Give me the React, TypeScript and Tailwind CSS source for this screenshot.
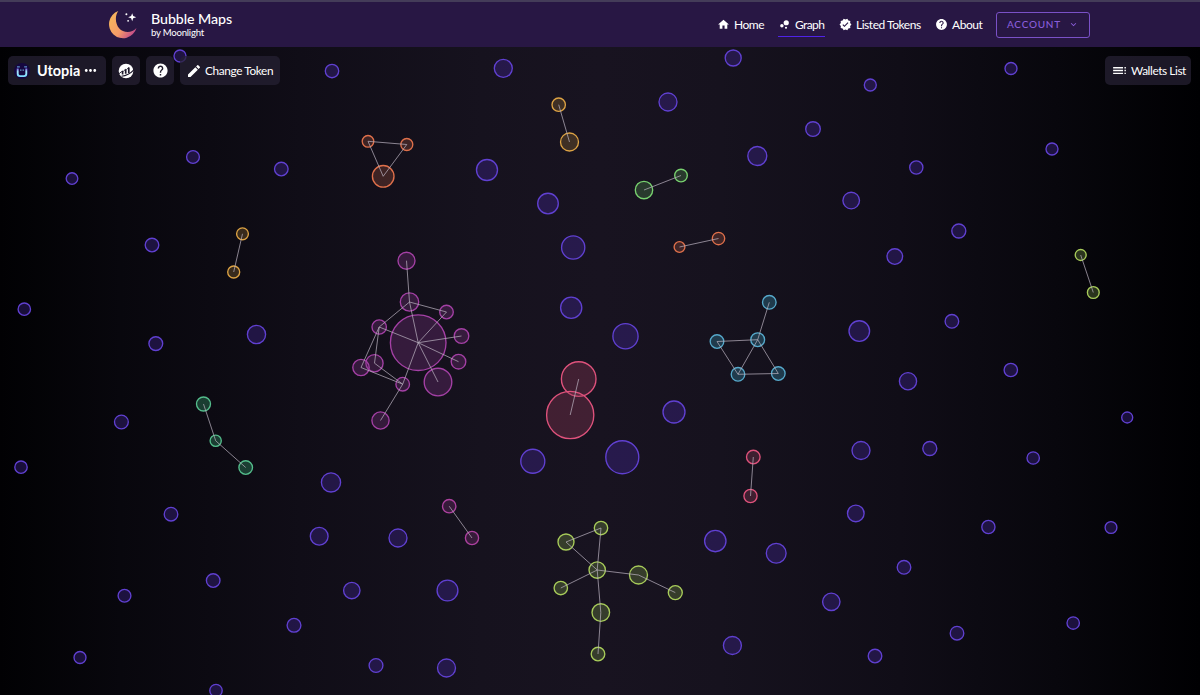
import React from 'react';
import { MdHome, MdBubbleChart, MdVerified, MdHelp, MdToc, MdEdit, MdMoreHoriz, MdExpandMore } from 'react-icons/md';

type Node = [number, number, number];
type Cluster = { stroke: string; fill: string; nodes: Node[]; links: [number, number][] };

const wallets: Node[] = [
  [180, 56, 6], [332, 71, 6.7], [503.3, 68.3, 9], [733.2, 58, 8], [668, 102, 9], [870.3, 85, 6], [1011, 68.5, 6],
  [813, 129, 7.3], [757.3, 156, 9.5], [916.3, 167.5, 6.6], [1052, 149, 6], [193, 157, 6.4], [281.3, 169, 6.8],
  [72, 178.5, 5.8], [487, 170, 10.5], [548, 203.5, 10.3], [851.2, 200.5, 8.3], [152, 245, 6.8], [573.2, 247.5, 11.6],
  [894.8, 256.5, 7.8], [958.8, 231, 7], [24.3, 309.2, 6.2], [571.2, 307.7, 10.6], [256.5, 334.5, 9.1], [155.8, 343.6, 6.9],
  [625.5, 336.2, 12.6], [859.3, 331, 10.3], [951.9, 321.3, 6.8], [908, 381.2, 8.6], [1010.8, 370, 6.7], [1127.2, 417.5, 5.5],
  [121.4, 422, 6.9], [674, 412, 11], [21, 467.2, 6.2], [532.8, 461.2, 12], [622.3, 457.2, 16.5], [861, 450.5, 9],
  [929.8, 448.5, 7], [1033.2, 458, 6.2], [331, 482.4, 9.6], [171, 514.2, 6.8], [319.2, 536.2, 8.9], [398, 538, 9],
  [855.8, 513.4, 8.3], [988.4, 527, 6.6], [1111, 527.5, 5.9], [715.3, 541, 10.7], [776.2, 553.2, 9.9], [904, 567.3, 6.8],
  [213.2, 580.5, 6.8], [124.5, 595.7, 6.4], [351.8, 590.5, 8.2], [447.5, 590.5, 10.4], [831.3, 601.8, 8.7],
  [294, 625.3, 6.9], [1073.2, 623, 6.2], [957, 633.2, 6.8], [732.4, 645.5, 9], [80, 657.5, 6], [376, 665.5, 6.9],
  [446.5, 668, 9], [875, 656, 6.8], [216, 690.5, 6.2],
];

const clusters: Cluster[] = [
  {
    stroke: '#a440a5', fill: '#7f348650',
    nodes: [[418.2, 342.7, 27.8], [406.5, 260.7, 8.5], [409.5, 302, 9.2], [446.5, 312, 6.8], [379.2, 327, 7.2],
      [461.5, 336, 7.3], [458.5, 361.7, 7.3], [438, 382, 13.8], [374.5, 363.2, 8.6], [361, 367.5, 8.2],
      [402.7, 384.2, 6.8], [380.5, 420.5, 8.6]],
    links: [[1, 2], [2, 0], [2, 3], [2, 4], [3, 0], [4, 0], [5, 0], [6, 0], [7, 0], [10, 0], [4, 8], [4, 9], [8, 10], [9, 10], [10, 11]],
  },
  { stroke: '#ad419f', fill: '#80317850', nodes: [[449.2, 506.2, 6.7], [472, 538, 6.6]], links: [[0, 1]] },
  { stroke: '#df527c', fill: '#90395858', nodes: [[578.7, 379, 17.3], [570.2, 415, 23.6]], links: [[0, 1]] },
  { stroke: '#df527c', fill: '#90395858', nodes: [[753.3, 457, 6.8], [750.5, 496, 6.6]], links: [[0, 1]] },
  { stroke: '#df704b', fill: '#9d513b50', nodes: [[368, 141.3, 5.8], [406.8, 144.5, 6], [383.2, 176.3, 10.8]], links: [[0, 1], [1, 2], [0, 2]] },
  { stroke: '#df704b', fill: '#9d513b50', nodes: [[679.5, 247, 5.4], [718.5, 238.5, 6.2]], links: [[0, 1]] },
  { stroke: '#dda344', fill: '#8c692f58', nodes: [[558.7, 104.7, 6.7], [569.5, 142, 9]], links: [[0, 1]] },
  { stroke: '#dda344', fill: '#8c692f58', nodes: [[242.5, 233.8, 5.9], [233.7, 272, 6]], links: [[0, 1]] },
  { stroke: '#78d16f', fill: '#4a864958', nodes: [[644, 190, 8.7], [681, 175.5, 6.3]], links: [[0, 1]] },
  { stroke: '#54bd8c', fill: '#28715180', nodes: [[203.5, 404, 7], [215.7, 440.8, 5.6], [245.7, 467.5, 6.8]], links: [[0, 1], [1, 2]] },
  { stroke: '#56a9cb', fill: '#2c6a8478', nodes: [[769.3, 302.3, 6.8], [757.7, 339.7, 6.9], [717, 341.5, 6.8], [738, 374.3, 6.8], [778.3, 373.5, 6.8]], links: [[0, 1], [1, 2], [1, 3], [1, 4], [2, 3], [3, 4]] },
  {
    stroke: '#a8cc5a', fill: '#718e4258',
    nodes: [[597.2, 570, 8.2], [566, 542, 8], [601, 528, 6.7], [638.5, 575, 9], [675.3, 592.6, 7], [560.8, 588, 6.7], [600.8, 612.5, 8.8], [598, 654, 6.8]],
    links: [[1, 2], [1, 0], [2, 0], [0, 3], [3, 4], [0, 5], [0, 6], [6, 7]],
  },
  { stroke: '#a8cc5a', fill: '#718e4258', nodes: [[1080.7, 255, 5.5], [1093.3, 292.5, 5.9]], links: [[0, 1]] },
];

function BubbleGraph() {
  return (
    <svg className="absolute inset-0 h-full w-full" viewBox="0 47 1200 648" fill="none" aria-label="Wallet bubble graph">
      <g fill="#4529a058" stroke="#6040d1" strokeWidth="1.35">
        {wallets.map(([x, y, r]) => <circle key={`${x}-${y}`} cx={x} cy={y} r={r} />)}
      </g>
      {clusters.map(({ stroke, fill, nodes, links }, i) => (
        <g key={i}>
          <g stroke={stroke} fill={fill} strokeWidth="1.35">
            {nodes.map(([x, y, r], j) => <circle key={j} cx={x} cy={y} r={r} />)}
          </g>
          <g stroke="#bcb3c1" strokeOpacity="0.75" strokeWidth="0.95">
            {links.map(([a, b], j) => <line key={j} x1={nodes[a][0]} y1={nodes[a][1]} x2={nodes[b][0]} y2={nodes[b][1]} />)}
          </g>
        </g>
      ))}
    </svg>
  );
}

function MoonLogo() {
  return (
    <svg className="h-[30px] w-[30px]" viewBox="0 0 30 30">
      <defs>
        <linearGradient id="moon" x1="2" y1="8" x2="27" y2="25" gradientUnits="userSpaceOnUse">
          <stop stopColor="#f6b45c" /><stop offset=".52" stopColor="#f49a69" /><stop offset="1" stopColor="#bd408d" />
        </linearGradient>
      </defs>
      <path fill="url(#moon)" d="M10.3 1A14 14 0 1 0 28.5 18C24 23.2 15.6 23.4 11.1 18.2C7.1 13.4 6.8 6 10.3 1Z" />
      <path fill="#fff" d="M24.2 3.2 25.2 6.1 28.2 7.2 25.2 8.3 24.2 11.2 23.1 8.3 20.2 7.2 23.1 6.1Z" />
      <circle cx="18.4" cy="4.3" r="1" fill="#fff" />
      <circle cx="20.1" cy="10.8" r="0.9" fill="#fff" />
    </svg>
  );
}

function UtopiaLogo() {
  return (
    <svg className="h-4 w-4 shrink-0" viewBox="0 0 16 16">
      <defs><linearGradient id="utopia" x2="0" y2="1"><stop stopColor="#7d62e8" /><stop offset=".4" stopColor="#a5e7fa" /><stop offset="1" stopColor="#7edcff" /></linearGradient></defs>
      <circle cx="8" cy="8" r="8" fill="#160840" />
      <path d="M3.7 5.6v5.2q0 2.3 2.3 2.3h4q2.3 0 2.3-2.3V5.6" fill="none" stroke="url(#utopia)" strokeWidth="1.9" />
      <path d="M3 3.8h2.8M10.2 3.8H13" stroke="#5b8fc8" strokeWidth="1.2" />
      <path d="M6 7.1h1.5M8.5 7.1H10" stroke="#75bbdc" strokeWidth="1" />
    </svg>
  );
}

function MarketIcon() {
  return (
    <svg className="h-4 w-4" viewBox="0 0 16 16">
      <circle cx="8" cy="8" r="7.3" fill="#fff" />
      <g stroke="#1c172a" fill="none">
        <path d="M4.6 7.9V11.4M7.7 6.2V10.8M10.8 4.6V9.9" strokeWidth="1.7" />
        <path d="M0.6 11 4.6 7.9M5.4 8.2 7.7 6.2M8.5 6.5 10.8 4.6" strokeWidth="0.9" />
        <path d="M3.4 13.2Q10.8 12.4 15.8 6.8" strokeWidth="1.1" />
      </g>
    </svg>
  );
}

const panel = 'flex h-[29px] items-center rounded-[5px] bg-[#252033]/75';

export default function App() {
  return (
    <div className="flex h-[695px] w-[1200px] flex-col overflow-hidden bg-black font-['Lato',sans-serif] text-white">
      <header className="flex h-[47px] shrink-0 items-center border-t-2 border-[#443c59] bg-[#281744] pr-[110px] pl-[108px]">
        <a className="flex items-center gap-[13px]">
          <MoonLogo />
          <span className="flex flex-col">
            <span className="text-[14.2px] leading-[15px] font-medium tracking-[-0.05px] whitespace-nowrap">Bubble Maps</span>
            <span className="text-[9.6px] leading-[13px] tracking-[-0.23px] whitespace-nowrap">by Moonlight</span>
          </span>
        </a>
        <nav className="ml-auto flex h-full items-center text-[12px] tracking-[-0.46px] whitespace-nowrap">
          <a className="flex w-[61px] items-center gap-[5px]"><MdHome className="size-[13px]" /><span className="-ml-px">Home</span></a>
          <a className="relative flex h-[25px] w-[47px] items-center gap-[4px] tracking-[-0.6px]"><MdBubbleChart className="size-[13px]" />Graph<span className="absolute bottom-0 left-0 h-px w-full bg-[#4f23e8]" /></a>
          <a className="ml-[14px] flex w-[96px] items-center gap-1"><MdVerified className="size-[13px] shrink-0" />Listed Tokens</a>
          <a className="flex w-[61px] items-center gap-1"><MdHelp className="size-[13px]" />About</a>
          <button className="flex h-[26px] w-[94px] items-center justify-between rounded-[3px] border border-[#7a51c7] px-[10px] text-[10px] font-medium tracking-[0.75px] text-[#8a5edb]">ACCOUNT<MdExpandMore className="size-[11px]" /></button>
        </nav>
      </header>
      <main className="relative flex-1 bg-[linear-gradient(90deg,#010103_0%,#08070d_10%,#100d17_25%,#16121e_40%,#181320_50%,#16121e_60%,#100d17_75%,#08070d_88%,#000002_100%)]">
        <BubbleGraph />
        <div className="relative flex items-start justify-between pt-[9px] pr-[9px] pl-2">
          <div className="flex gap-[6px]">
            <button className={`${panel} w-[98px] pl-[6px]`}><UtopiaLogo /><span className="ml-[7px] text-[14.4px] font-bold">Utopia</span><MdMoreHoriz className="ml-[2px] size-[17px] shrink-0" /></button>
            <button className={`${panel} w-[28px] justify-center`}><MarketIcon /></button>
            <button className={`${panel} w-[28px] justify-center`}><MdHelp className="size-[17px]" /></button>
            <button className={`${panel} w-[100px] gap-[3px] pl-[6px] text-[11.8px] tracking-[-0.36px] whitespace-nowrap`}><MdEdit className="size-4 shrink-0" />Change Token</button>
          </div>
          <button className={`${panel} w-[86px] gap-[3px] pl-[6px] text-[11.8px] tracking-[-0.4px] whitespace-nowrap`}><MdToc className="size-[17px] shrink-0" />Wallets List</button>
        </div>
      </main>
    </div>
  );
}
